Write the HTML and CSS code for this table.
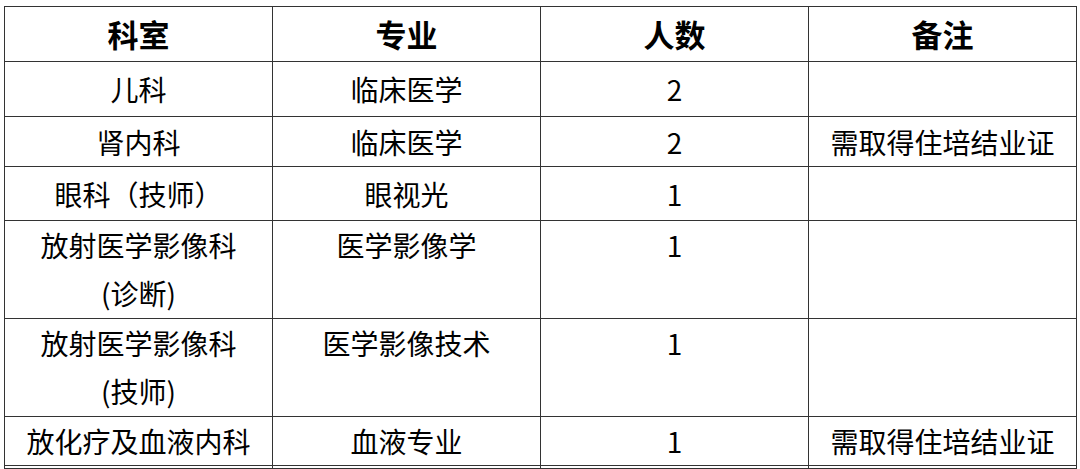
FILE: index.html
```html
<!DOCTYPE html>
<html lang="zh-CN">
<head>
<meta charset="utf-8">
<title>招聘岗位</title>
<link rel="stylesheet" href="styles.css">
</head>
<body>
<table class="jobs">
  <colgroup>
    <col class="c"><col class="c"><col class="c"><col class="c">
  </colgroup>
  <tr class="head r55">
    <th>科室</th><th>专业</th><th>人数</th><th>备注</th>
  </tr>
  <tr class="r55">
    <td>儿科</td><td>临床医学</td><td>2</td><td></td>
  </tr>
  <tr class="r50">
    <td>肾内科</td><td>临床医学</td><td>2</td><td>需取得住培结业证</td>
  </tr>
  <tr class="r54">
    <td>眼科（技师）</td><td>眼视光</td><td>1</td><td></td>
  </tr>
  <tr class="r98">
    <td>放射医学影像科<br>(诊断)</td><td>医学影像学</td><td>1</td><td></td>
  </tr>
  <tr class="r98">
    <td>放射医学影像科<br>(技师)</td><td>医学影像技术</td><td>1</td><td></td>
  </tr>
  <tr class="r49">
    <td>放化疗及血液内科</td><td>血液专业</td><td>1</td><td>需取得住培结业证</td>
  </tr>
  <tr class="rend">
    <td></td><td></td><td></td><td></td>
  </tr>
</table>
</body>
</html>
```

FILE: styles.css
```css
html, body {
  margin: 0;
  padding: 0;
  background: #ffffff;
}

body {
  padding: 6px 4px 0 4px;
  font-family: "Noto Sans CJK SC", "Noto Sans", sans-serif;
  color: #000000;
  height: 469px;
  box-sizing: border-box;
  overflow: hidden;
}

.jobs {
  border-collapse: collapse;
  table-layout: fixed;
  width: 1073px;
}

.jobs .c {
  width: 268px;
}

.jobs th,
.jobs td {
  border: 1px solid #333333;
  padding: 0;
  text-align: center;
  font-size: 28px;
  line-height: 48px;
  font-weight: 400;
  vertical-align: top;
}

.jobs th {
  font-size: 31px;
  font-weight: 700;
  vertical-align: middle;
}

.r55 td, .r50 td, .r54 td, .r49 td {
  vertical-align: middle;
}

.r55 { height: 55px; }
.r50 { height: 50px; }
.r54 { height: 54px; }
.r98 { height: 98px; }
.r49 { height: 49px; }
.rend td { height: 2px; line-height: 2px; }
```
